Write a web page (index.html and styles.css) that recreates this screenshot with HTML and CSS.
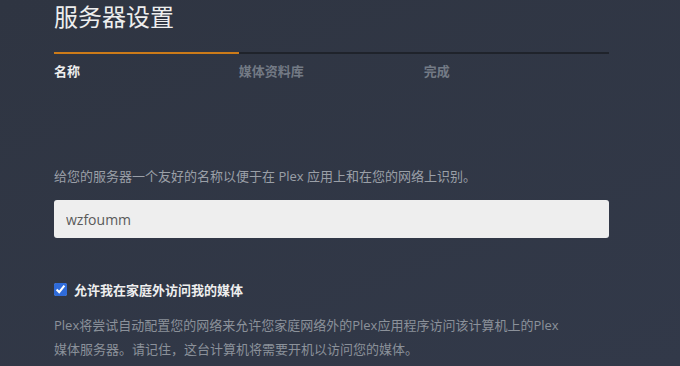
FILE: index.html
```html
<!DOCTYPE html>
<html lang="zh-CN">
<head>
    <meta charset="UTF-8">
    <title>服务器设置</title>
    <link rel="stylesheet" href="styles.css">
</head>
<body>
    <div class="setup">
        <h1 class="title">服务器设置</h1>
        <div class="progress">
            <div class="progress-fill"></div>
        </div>
        <div class="steps">
            <span class="step active">名称</span>
            <span class="step">媒体资料库</span>
            <span class="step">完成</span>
        </div>

        <p class="hint">给您的服务器一个友好的名称以便于在 Plex 应用上和在您的网络上识别。</p>
        <input class="name-input" type="text" value="wzfoumm">

        <label class="check-row">
            <input type="checkbox" checked>
            <span>允许我在家庭外访问我的媒体</span>
        </label>
        <p class="note">Plex将尝试自动配置您的网络来允许您家庭网络外的Plex应用程序访问该计算机上的Plex媒体服务器。请记住，这台计算机将需要开机以访问您的媒体。</p>
    </div>
</body>
</html>
```

FILE: styles.css
```css
body {
    margin: 0;
    height: 100vh;
    background: linear-gradient(160deg, #2f3542 0%, #323949 100%);
    font-family: "Open Sans", "Noto Sans CJK SC", sans-serif;
    color: #eee;
    overflow: hidden;
}

.setup {
    width: 555px;
    margin-left: 54px;
}

.title {
    margin: 0;
    padding-top: 1px;
    font-size: 24px;
    font-weight: 400;
    line-height: 32px;
    color: #eee;
}

.progress {
    margin-top: 19px;
    height: 2px;
    background-color: #1f232b;
}

.progress-fill {
    width: 33.3%;
    height: 100%;
    background-color: #cc7b19;
}

.steps {
    display: flex;
    margin-top: 8px;
}

.step {
    width: 33.3%;
    font-size: 13px;
    font-weight: 700;
    line-height: 18px;
    color: #737a85;
}

.step.active {
    color: #eee;
}

.hint {
    margin: 86px 0 0;
    font-size: 13px;
    line-height: 20px;
    color: #9a9fa7;
}

.name-input {
    display: block;
    box-sizing: border-box;
    width: 555px;
    height: 38px;
    margin-top: 14px;
    padding: 0 12px;
    border: none;
    border-radius: 3px;
    background-color: #eeeeee;
    font-family: inherit;
    font-size: 14px;
    color: #5a5a5a;
}

.check-row {
    display: flex;
    align-items: center;
    gap: 7px;
    margin-top: 42px;
    font-size: 13px;
    font-weight: 700;
    color: #eee;
}

.check-row input {
    width: 13px;
    height: 13px;
    margin: 0;
    accent-color: #2f6bd9;
}

.note {
    max-width: 510px;
    margin: 14px 0 0;
    font-size: 13px;
    line-height: 24px;
    color: #8b919a;
}
```
